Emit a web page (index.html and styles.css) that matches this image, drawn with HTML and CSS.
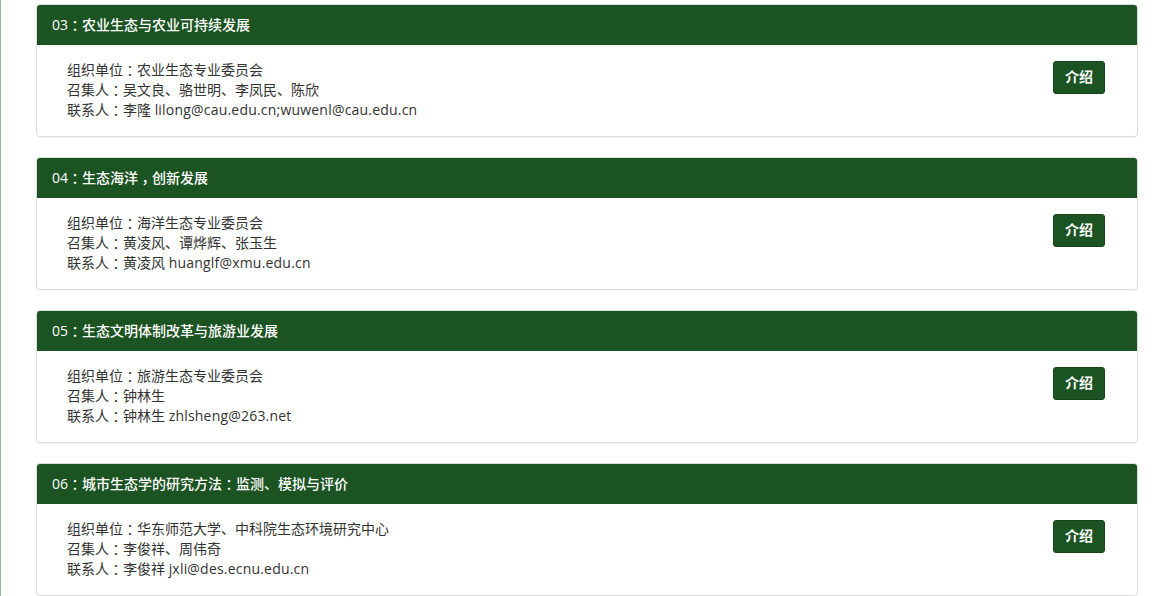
FILE: index.html
```html
<!DOCTYPE html>
<html lang="zh-CN">
<head>
<meta charset="utf-8">
<title>分会场</title>
<link rel="stylesheet" href="styles.css">
</head>
<body>
<div class="page">
  <div class="panel">
    <div class="panel-heading">03<span class="p">：</span>农业生态与农业可持续发展</div>
    <div class="panel-body">
      <div class="info">
        <div>组织单位<span class="p">：</span>农业生态专业委员会</div>
        <div>召集人<span class="p">：</span>吴文良、骆世明、李凤民、陈欣</div>
        <div>联系人<span class="p">：</span>李隆 <span class="mail">lilong@cau.edu.cn;wuwenl@cau.edu.cn</span></div>
      </div>
      <a class="btn">介绍</a>
    </div>
  </div>
  <div class="panel">
    <div class="panel-heading">04<span class="p">：</span>生态海洋<span class="p">，</span>创新发展</div>
    <div class="panel-body">
      <div class="info">
        <div>组织单位<span class="p">：</span>海洋生态专业委员会</div>
        <div>召集人<span class="p">：</span>黄凌风、谭烨辉、张玉生</div>
        <div>联系人<span class="p">：</span>黄凌风 <span class="mail">huanglf@xmu.edu.cn</span></div>
      </div>
      <a class="btn">介绍</a>
    </div>
  </div>
  <div class="panel">
    <div class="panel-heading">05<span class="p">：</span>生态文明体制改革与旅游业发展</div>
    <div class="panel-body">
      <div class="info">
        <div>组织单位<span class="p">：</span>旅游生态专业委员会</div>
        <div>召集人<span class="p">：</span>钟林生</div>
        <div>联系人<span class="p">：</span>钟林生 <span class="mail">zhlsheng@263.net</span></div>
      </div>
      <a class="btn">介绍</a>
    </div>
  </div>
  <div class="panel">
    <div class="panel-heading">06<span class="p">：</span>城市生态学的研究方法<span class="p">：</span>监测、模拟与评价</div>
    <div class="panel-body">
      <div class="info">
        <div>组织单位<span class="p">：</span>华东师范大学、中科院生态环境研究中心</div>
        <div>召集人<span class="p">：</span>李俊祥、周伟奇</div>
        <div>联系人<span class="p">：</span>李俊祥 <span class="mail">jxli@des.ecnu.edu.cn</span></div>
      </div>
      <a class="btn">介绍</a>
    </div>
  </div>
</div>
</body>
</html>
```
FILE: styles.css
```css
html, body {
  margin: 0;
  padding: 0;
  background: #fff;
}
body {
  font-family: "Open Sans", "Noto Sans CJK SC", sans-serif;
  font-size: 14px;
  line-height: 20px;
  color: #333;
}
.p {
  font-feature-settings: "halt";
  margin: 0 0.25em;
}
.mail {
  letter-spacing: 0.2px;
}
.page {
  border-left: 1px solid #8cc38c;
  padding: 4px 0 0 35px;
  height: 596px;
  overflow: hidden;
  box-sizing: border-box;
}
.panel {
  width: 1100px;
  border: 1px solid #ddd;
  border-radius: 4px;
  margin-bottom: 20px;
  overflow: hidden;
  box-shadow: 0 1px 1px rgba(0,0,0,0.05);
}
.panel-heading {
  background: #1c5322;
  color: #fff;
  font-size: 14px;
  font-weight: 500;
  line-height: 20px;
  padding: 10px 15px;
}
.panel-body {
  display: flex;
  align-items: flex-start;
  justify-content: space-between;
  padding: 15px 32px 16px 30px;
}
.btn {
  display: block;
  margin-top: 1px;
  background: #1c5322;
  color: #fff;
  border: 1px solid #16441b;
  border-radius: 3px;
  padding: 5px 11px 6px;
  font-size: 14px;
  font-weight: 600;
  line-height: 20px;
}
```
